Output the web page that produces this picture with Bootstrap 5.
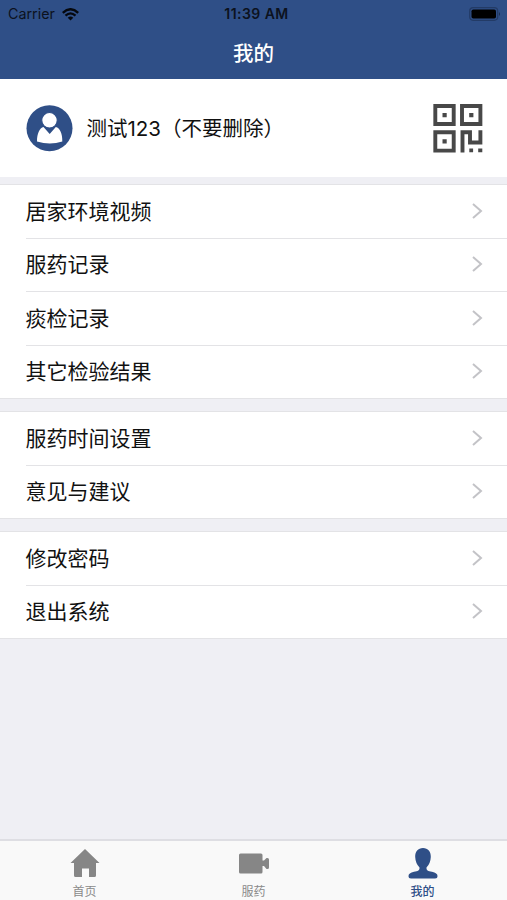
<!DOCTYPE html>
<html lang="zh-CN">
<head>
<meta charset="utf-8">
<meta name="viewport" content="width=device-width, initial-scale=1">
<title>我的</title>
<link href="https://cdn.jsdelivr.net/npm/bootstrap@5.3.0/dist/css/bootstrap.min.css" rel="stylesheet">
<style>
  :root { --brand: #2f4f87; --line: #e3e3e6; }
  body { font-family: Inter, "Noto Sans CJK SC", sans-serif; background: #efeff4; color: #111; }
  .screen { height: 900px; overflow: hidden; }
  .app-head { height: 79px; background: var(--brand); }
  .status { height: 28px; padding: 0 6px 0 8px; font-size: 14.3px; line-height: 28px; color: #0c121e; }
  .status > * { flex: 1 1 0; }
  .clock { font-size: 14px; font-weight: 600; letter-spacing: .45px; padding-left: 4px; white-space: nowrap; }
  .page-title { height: 51px; font-size: 20.5px; font-weight: 500; line-height: 51px; }
  .profile { height: 98px; padding: 0 24px 0 26px; }
  .who { font-size: 20.5px; margin-left: 13.5px; padding-top: 3px; }
  .groups { padding-top: 7px; }
  .menu { border-top: 1px solid var(--line); border-bottom: 1px solid var(--line); margin-bottom: 12px; padding-left: 25.5px; }
  .menu-row { height: 52.5px; padding-right: 24px; font-size: 21px; color: #111; text-decoration: none; }
  .menu-row + .menu-row { height: 53.5px; border-top: 1px solid var(--line); }
  .menu-row svg { margin-bottom: 1px; }
  .tabs { height: 61px; background: #f9f9f9; border-top: 2px solid #dedee3; }
  .tab-item { flex: 1 1 0; padding-top: 7px; font-size: 12px; line-height: 16px; color: #8a8a8a; text-decoration: none; }
  .tab-item span { margin-top: 4px; }
  .tab-item.current { color: var(--brand); font-weight: 500; }
</style>
<script src="https://cdn.jsdelivr.net/npm/bootstrap@5.3.0/dist/js/bootstrap.bundle.min.js"></script>
</head>
<body>
<svg class="d-none"><symbol id="chev" viewBox="0 0 12 18"><path d="M2 2l8 7-8 7" fill="none" stroke="#c3c3c7" stroke-width="2"/></symbol></svg>
<div class="screen d-flex flex-column">
  <header class="app-head flex-shrink-0">
    <div class="status d-flex align-items-center">
      <div class="d-flex align-items-center">Carrier
        <svg width="17" height="13" style="margin-left:7px" viewBox="0 0 17 13" fill="none" stroke="#05080e" stroke-width="2.3"><path d="M.8 4.8Q8.500-2.400 16.200 4.800M3.500 7.700Q8.500 3 13.500 7.700"/><path d="M8.500 12.500L5.700 9.700Q8.500 7.500 11.300 9.700Z" fill="#05080e" stroke="none"/></svg>
      </div>
      <div class="clock text-center">11:39 AM</div>
      <div class="d-flex justify-content-end">
        <svg width="32" height="14" viewBox="0 0 32 14"><rect x=".7" y=".7" width="28" height="12.600" rx="3.500" fill="none" stroke="#233b66" stroke-width="1.200"/><rect x="2.500" y="2.500" width="24.500" height="9" rx="1.800"/><path d="M30 5q2 2 0 4z" fill="#1b2e50"/></svg>
      </div>
    </div>
    <h1 class="page-title text-white text-center m-0">我的</h1>
  </header>

  <section class="profile bg-white d-flex align-items-center flex-shrink-0">
    <svg width="47" height="47" viewBox="0 0 47 47"><circle cx="23.500" cy="23.300" r="23" fill="#2f4f87"/><path fill="#fff" d="M17.500 22L23.700 29L29.800 22C34 23 36.500 28.500 36.300 36.500Q24 40.500 11 36.500C11 28.500 13.500 23 17.500 22Z"/><circle cx="23.500" cy="15.300" r="7.800" fill="#fff" stroke="#2f4f87" stroke-width="1.200"/><path fill="#2f4f87" d="M20.500 23h6.200l-3 5z"/></svg>
    <div class="who">测试123（不要删除）</div>
    <svg class="ms-auto" width="50" height="50" viewBox="0 0 50 50"><g fill="none" stroke="#484848" stroke-width="3.900"><path d="M2.300 3h18.400v18H2.300zM29 3h18.400v18H29zM2.300 29.300h18.400v18.300H2.300z"/><path d="M29.500 49.500V29.300h7.500v10.200H47.400V27.300"/></g><path fill="#484848" d="M9.500 10h4.200v4.200H9.500zM36.200 10h4.200v4.200h-4.200zM9.500 36.300h4.200v4.200H9.500zM36.300 45.500h3.800v3.800h-3.800zM45.200 45.500h4.100v3.800h-4.100z"/></svg>
  </section>

  <main class="groups flex-grow-1">
    <nav class="menu bg-white">
      <a class="menu-row d-flex align-items-center justify-content-between" href="#">居家环境视频<svg width="12" height="18"><use href="#chev"/></svg></a>
      <a class="menu-row d-flex align-items-center justify-content-between" href="#">服药记录<svg width="12" height="18"><use href="#chev"/></svg></a>
      <a class="menu-row d-flex align-items-center justify-content-between" href="#">痰检记录<svg width="12" height="18"><use href="#chev"/></svg></a>
      <a class="menu-row d-flex align-items-center justify-content-between" href="#">其它检验结果<svg width="12" height="18"><use href="#chev"/></svg></a>
    </nav>
    <nav class="menu bg-white">
      <a class="menu-row d-flex align-items-center justify-content-between" href="#">服药时间设置<svg width="12" height="18"><use href="#chev"/></svg></a>
      <a class="menu-row d-flex align-items-center justify-content-between" href="#">意见与建议<svg width="12" height="18"><use href="#chev"/></svg></a>
    </nav>
    <nav class="menu bg-white">
      <a class="menu-row d-flex align-items-center justify-content-between" href="#">修改密码<svg width="12" height="18"><use href="#chev"/></svg></a>
      <a class="menu-row d-flex align-items-center justify-content-between" href="#">退出系统<svg width="12" height="18"><use href="#chev"/></svg></a>
    </nav>
  </main>

  <footer class="tabs d-flex flex-shrink-0">
    <a class="tab-item d-flex flex-column align-items-center" href="#">
      <svg width="30" height="32" viewBox="0 0 30 32" fill="#868686"><path d="M15 1L29.500 15H26v12.500q0 1.500-1.500 1.500H19V20.500h-7v8.500H5.500Q4 29 4 27.500V15H.5Z"/></svg><span>首页</span>
    </a>
    <a class="tab-item d-flex flex-column align-items-center" href="#">
      <svg width="30" height="32" viewBox="0 0 30 32" fill="#868686"><rect y="5.500" width="23.500" height="20" rx="1.500"/><path d="M23 12.500h2l2.500-2.500H28.500q1.500 0 1.500 1.500v8q0 1.500-1.500 1.500H27.500L25 18H23Z"/></svg><span>服药</span>
    </a>
    <a class="tab-item current d-flex flex-column align-items-center" href="#">
      <svg width="30" height="32" viewBox="0 0 30 32" fill="#2f4f87"><path d="M15 0C20 0 23 3.500 22.800 9Q22.500 15.500 18.500 19.500C18.200 22.500 20 23 24 23.800Q29.500 25 29.500 28Q29.500 30.500 27 30.500H3Q.5 30.500.5 28Q.5 25 6 23.800C10 23 11.800 22.500 11.500 19.500Q7.500 15.500 7.200 9C7 3.500 10 0 15 0Z"/></svg><span>我的</span>
    </a>
  </footer>
</div>
</body>
</html>
